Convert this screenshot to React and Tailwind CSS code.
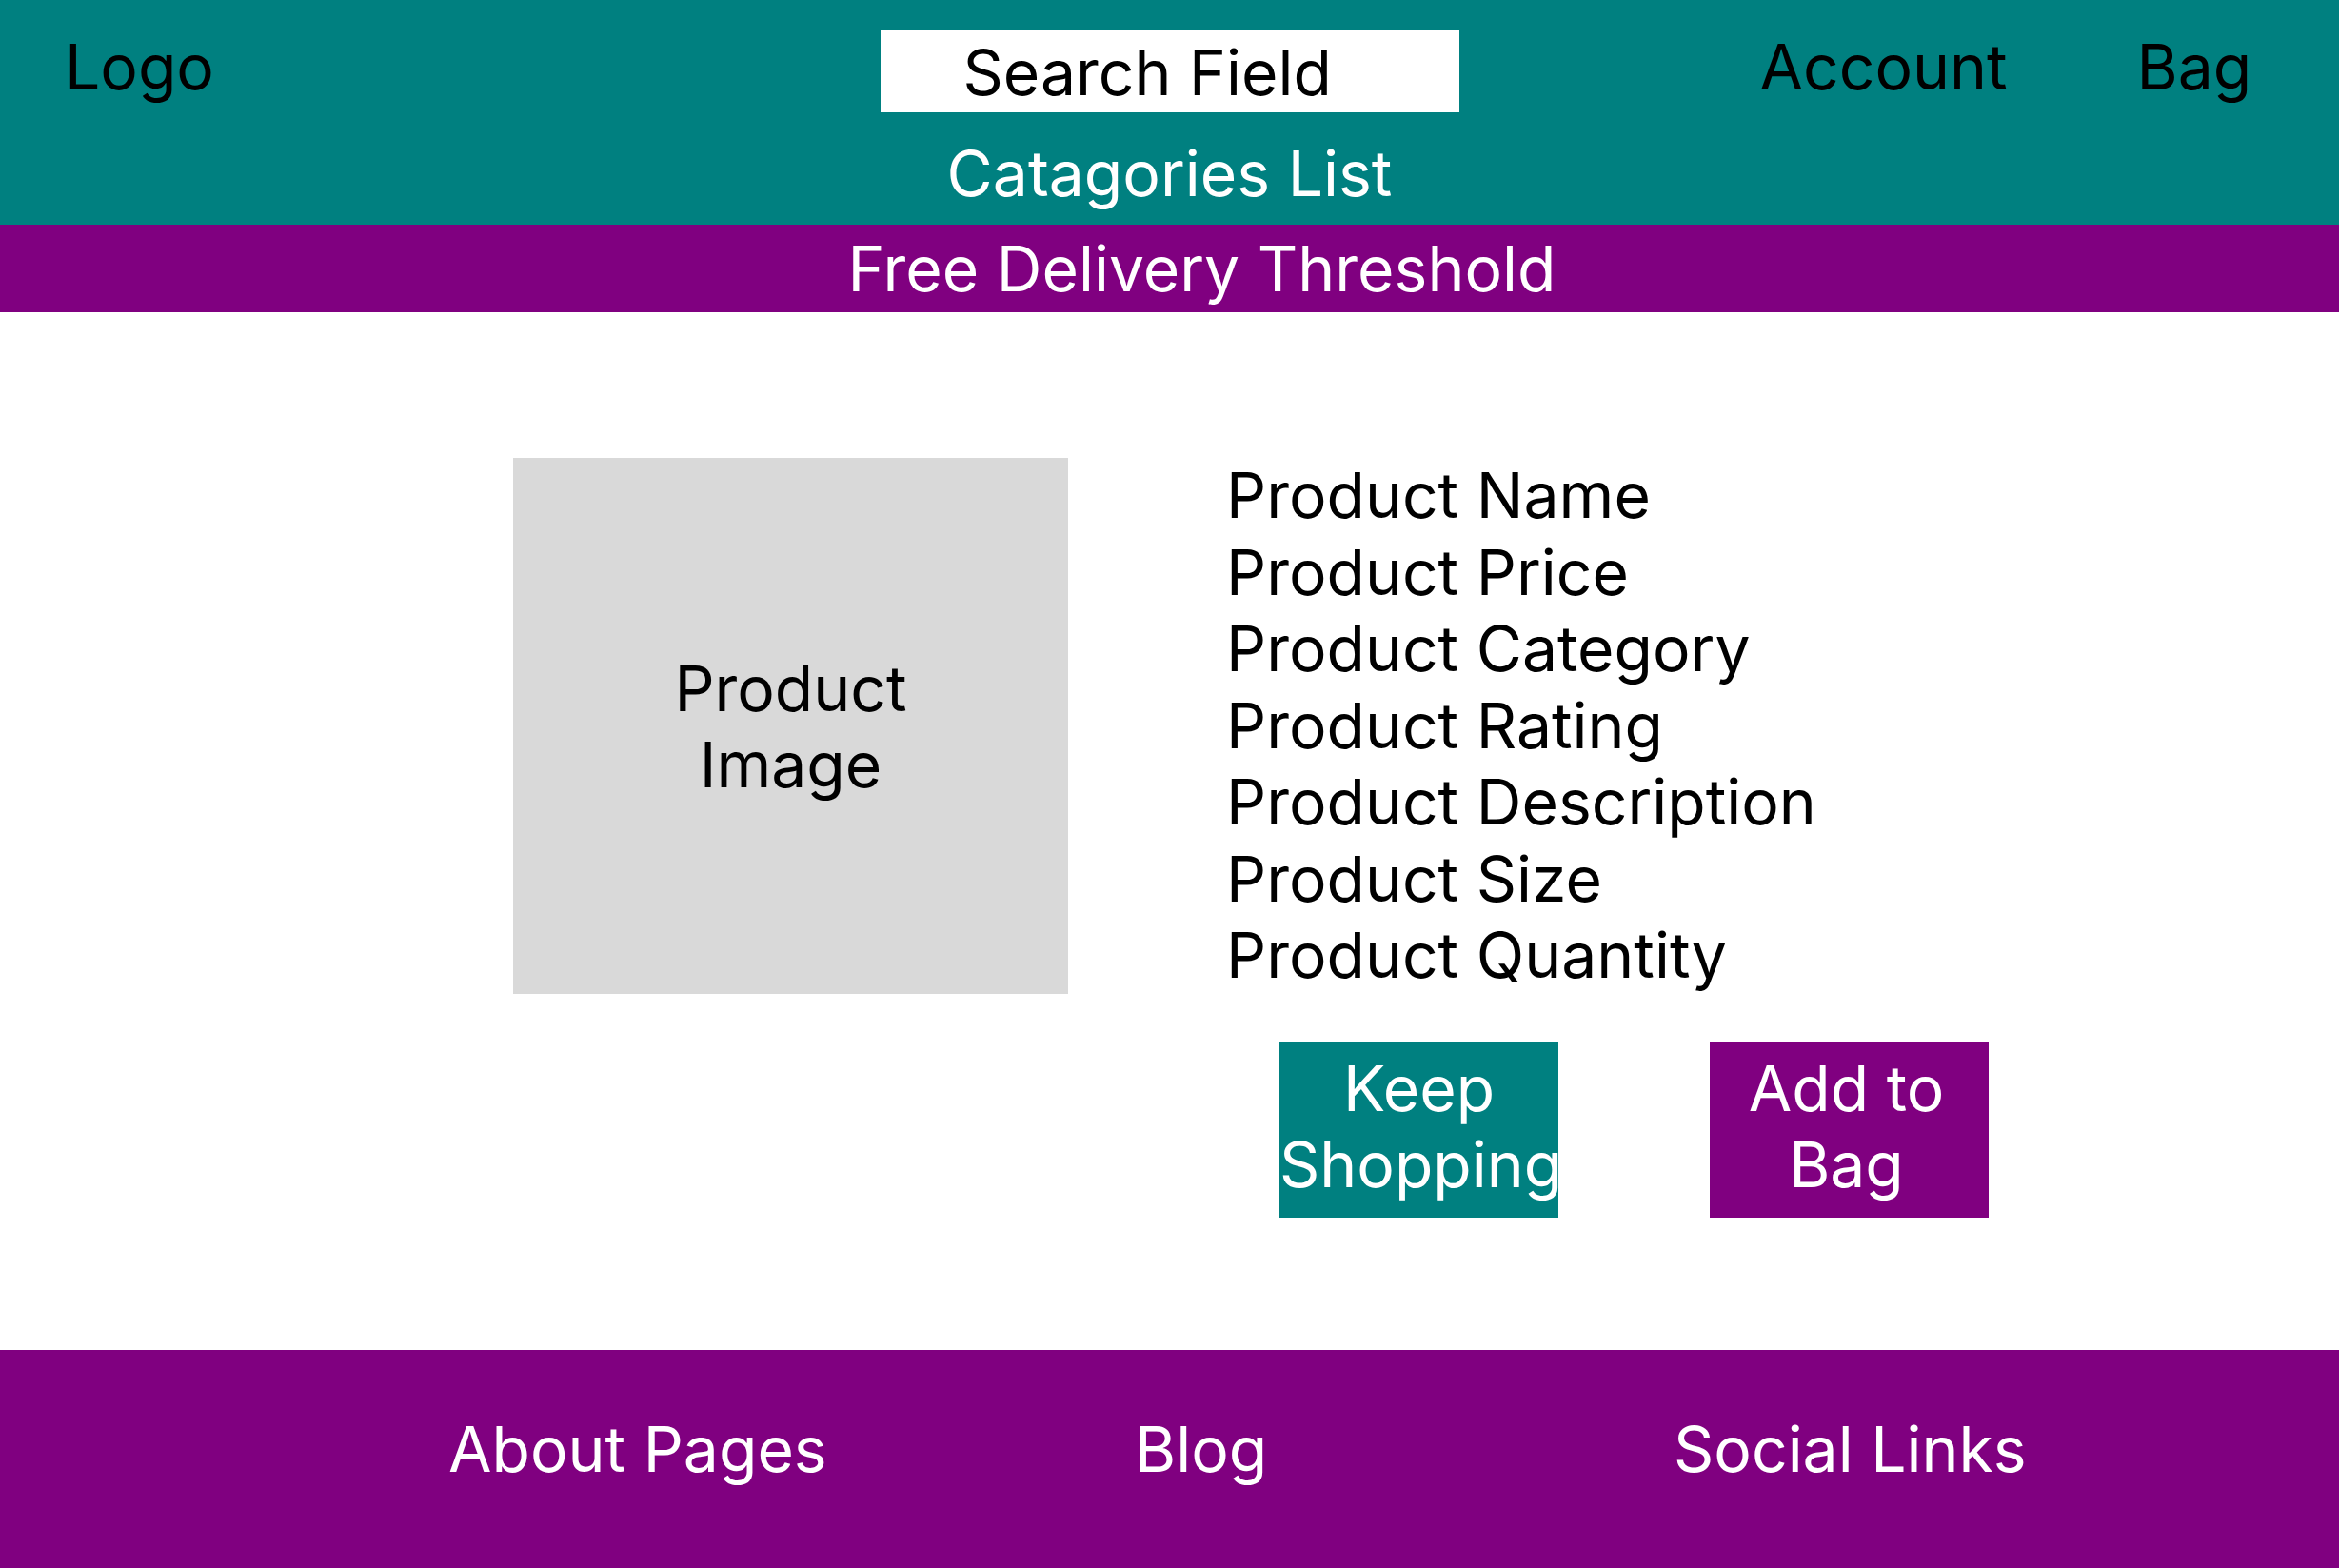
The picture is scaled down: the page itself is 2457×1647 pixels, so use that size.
export default function App() {
  const font = { fontFamily: '"Inter", "Noto Sans", sans-serif' };
  const details = [
    "Product Name",
    "Product Price",
    "Product Category",
    "Product Rating",
    "Product Description",
    "Product Size",
    "Product Quantity",
  ];
  return (
    <div className="w-[2457px] h-[1647px] flex flex-col bg-white text-[66px] leading-[80px] text-black" style={font}>
      <header className="h-[236px] bg-[#008080] flex flex-col pt-[30px]">
        <div className="grid grid-cols-[1fr_608px_1fr] items-start">
          <div className="pl-[68px]">Logo</div>
          <div className="mt-[2px] h-[86px] bg-white pt-[4px] pl-[87px] whitespace-nowrap">Search Field</div>
          <div className="flex pl-[316px]">
            <div className="w-[396px]">Account</div>
            <div>Bag</div>
          </div>
        </div>
        <div className="mt-[24px] text-center text-white">Catagories List</div>
      </header>
      <div className="h-[92px] bg-[#800080] flex items-center justify-center pl-[68px] text-white">
        Free Delivery Threshold
      </div>
      <main className="h-[1090px] pt-[153px] pl-[539px] flex items-start">
        <div className="w-[583px] h-[563px] bg-[#d9d9d9] flex items-center justify-center text-center">
          <div>
            Product
            <br />
            Image
          </div>
        </div>
        <div className="ml-[166px] flex flex-col">
          <div className="flex flex-col leading-[80.5px] -mt-[1px]">
            {details.map((d) => (
              <div key={d}>{d}</div>
            ))}
          </div>
          <div className="mt-[51px] ml-[56px] flex gap-[159px]">
            <div className="w-[293px] h-[184px] bg-[#008080] text-white text-center pt-[8px]">
              Keep Shopping
            </div>
            <div className="w-[293px] h-[184px] bg-[#800080] text-white text-center pt-[8px] pr-[6px]">
              Add to Bag
            </div>
          </div>
        </div>
      </main>
      <footer className="flex-1 bg-[#800080] text-white pt-[64px] pl-[471px] flex items-start">
        <div className="w-[721px]">About Pages</div>
        <div className="w-[566px]">Blog</div>
        <div>Social Links</div>
      </footer>
    </div>
  );
}
